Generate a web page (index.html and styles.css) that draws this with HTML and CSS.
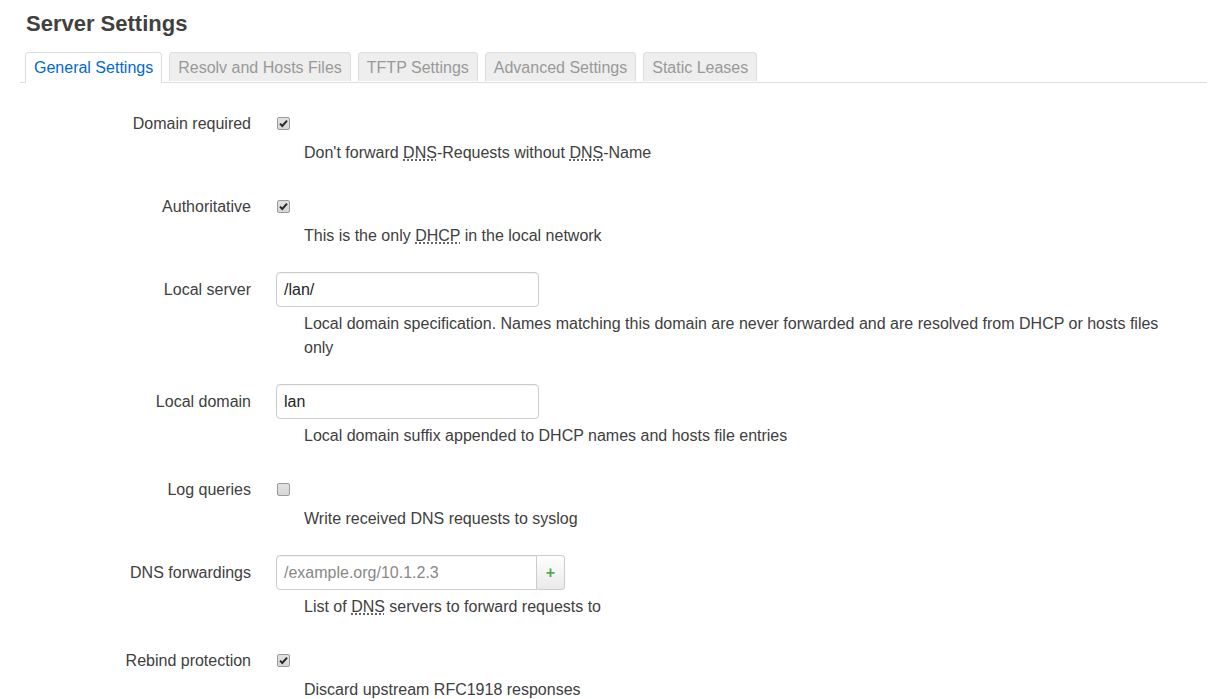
FILE: index.html
```html
<!DOCTYPE html>
<html>
<head>
<meta charset="utf-8">
<link rel="stylesheet" href="styles.css">
</head>
<body>
<div class="page">
  <h2 class="title">Server Settings</h2>
  <ul class="tabs">
    <li class="tab active">General Settings</li>
    <li class="tab">Resolv and Hosts Files</li>
    <li class="tab">TFTP Settings</li>
    <li class="tab">Advanced Settings</li>
    <li class="tab">Static Leases</li>
  </ul>
  <div class="form">
    <div class="row">
      <div class="lbl">Domain required</div>
      <div class="field">
        <div class="ctl"><span class="cb"><svg width="11" height="11" viewBox="0 0 11 11"><path d="M2 5.6 L4.3 8 L9 2.6" fill="none" stroke="#2a2a2a" stroke-width="2"/></svg></span></div>
        <div class="desc">Don't forward <abbr title="Domain Name System">DNS</abbr>-Requests without <abbr title="Domain Name System">DNS</abbr>-Name</div>
      </div>
    </div>
    <div class="row">
      <div class="lbl">Authoritative</div>
      <div class="field">
        <div class="ctl"><span class="cb"><svg width="11" height="11" viewBox="0 0 11 11"><path d="M2 5.6 L4.3 8 L9 2.6" fill="none" stroke="#2a2a2a" stroke-width="2"/></svg></span></div>
        <div class="desc">This is the only <abbr title="Dynamic Host Configuration Protocol">DHCP</abbr> in the local network</div>
      </div>
    </div>
    <div class="row">
      <div class="lbl">Local server</div>
      <div class="field">
        <div class="ctl"><div class="input">/lan/</div></div>
        <div class="desc desc-in">Local domain specification. Names matching this domain are never forwarded and are resolved from DHCP or hosts files only</div>
      </div>
    </div>
    <div class="row">
      <div class="lbl">Local domain</div>
      <div class="field">
        <div class="ctl"><div class="input">lan</div></div>
        <div class="desc desc-in">Local domain suffix appended to DHCP names and hosts file entries</div>
      </div>
    </div>
    <div class="row">
      <div class="lbl">Log queries</div>
      <div class="field">
        <div class="ctl"><span class="cb"></span></div>
        <div class="desc">Write received DNS requests to syslog</div>
      </div>
    </div>
    <div class="row">
      <div class="lbl">DNS forwardings</div>
      <div class="field">
        <div class="ctl">
          <div class="input input-grp placeholder">/example.org/10.1.2.3</div>
          <div class="addbtn">+</div>
        </div>
        <div class="desc desc-in">List of <abbr title="Domain Name System">DNS</abbr> servers to forward requests to</div>
      </div>
    </div>
    <div class="row">
      <div class="lbl">Rebind protection</div>
      <div class="field">
        <div class="ctl"><span class="cb"><svg width="11" height="11" viewBox="0 0 11 11"><path d="M2 5.6 L4.3 8 L9 2.6" fill="none" stroke="#2a2a2a" stroke-width="2"/></svg></span></div>
        <div class="desc">Discard upstream RFC1918 responses</div>
      </div>
    </div>
  </div>
</div>
</body>
</html>
```

FILE: styles.css
```css
html, body {
  margin: 0;
  padding: 0;
  background: #fff;
}
body {
  font-family: "Liberation Sans", Arial, sans-serif;
  font-size: 16px;
  color: #404040;
}
.page {
  padding: 0 2px 0 20px;
}
.title {
  margin: 0;
  padding: 11px 0 0 6px;
  font-size: 22px;
  line-height: 26px;
  font-weight: bold;
  color: #404040;
  height: 26px;
}
.tabs {
  list-style: none;
  margin: 15px 0 0 0;
  padding: 0 0 0 5px;
  display: flex;
  gap: 7px;
  border-bottom: 1px solid #ddd;
  height: 30px;
}
.tab {
  height: 28px;
  line-height: 30px;
  padding: 0 8px;
  border: 1px solid #ddd;
  border-bottom: none;
  border-radius: 4px 4px 0 0;
  background: #eee;
  color: #999;
  font-size: 16px;
  overflow: hidden;
}
.tab.active {
  background: #fff;
  color: #0069d6;
  height: 30px;
  margin-bottom: -1px;
}
.form {
  padding-top: 23px;
}
.row {
  display: grid;
  grid-template-columns: 231px 1fr;
  column-gap: 25px;
  margin-bottom: 24px;
}
.lbl {
  text-align: right;
  height: 35px;
  line-height: 35px;
  color: #404040;
}
.field {
  min-width: 0;
}
.ctl {
  height: 35px;
  display: flex;
  align-items: center;
}
.cb {
  width: 13px;
  height: 13px;
  box-sizing: border-box;
  margin-left: 1px;
  border: 1px solid #9a9a9a;
  border-radius: 2px;
  background: linear-gradient(#e2e2e2, #d6d6d6);
  display: flex;
  align-items: center;
  justify-content: center;
}
.cb svg {
  display: block;
}
.input {
  box-sizing: border-box;
  width: 263px;
  height: 35px;
  border: 1px solid #ccc;
  border-radius: 4px;
  padding: 0 7px;
  line-height: 33px;
  color: #222;
  background: #fff;
  box-shadow: inset 0 1px 1px rgba(0,0,0,0.05);
}
.input-grp {
  width: 261px;
  border-radius: 4px 0 0 4px;
}
.placeholder {
  color: #888;
}
.addbtn {
  box-sizing: border-box;
  width: 28px;
  height: 35px;
  border: 1px solid #ccc;
  border-left: none;
  border-radius: 0 4px 4px 0;
  background: linear-gradient(#fff, #e9e9e9);
  color: #4cae4c;
  font-weight: bold;
  font-size: 16px;
  line-height: 33px;
  text-align: center;
}
.desc {
  margin-left: 28px;
  padding-right: 18px;
  line-height: 24px;
  color: #404040;
}
.desc-in {
  margin-top: 5px;
}
abbr {
  text-decoration: underline dotted;
  text-underline-offset: 2px;
  cursor: help;
}
```
